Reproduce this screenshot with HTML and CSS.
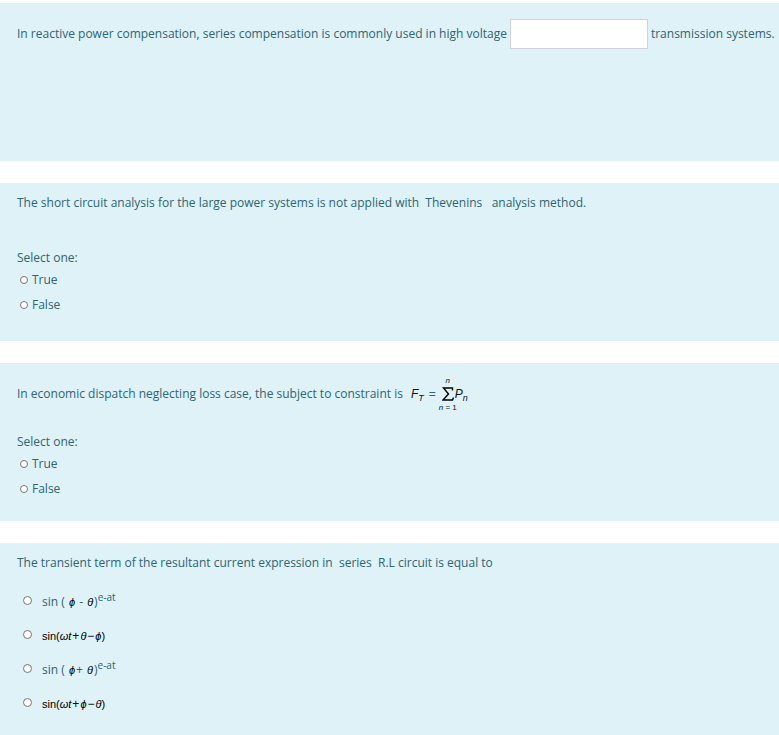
FILE: index.html
```html
<!DOCTYPE html>
<html lang="en">
<head>
<meta charset="utf-8">
<meta name="viewport" content="width=device-width, initial-scale=1">
<title>Quiz</title>
<link rel="stylesheet" href="styles.css">
</head>
<body>
<main class="quiz">
  <section class="question">
    <div class="prompt prompt-blank">
      <label for="blank">In reactive power compensation, series compensation is commonly used in high voltage</label>
      <input class="blank" id="blank" type="text">
      <span>transmission systems.</span>
    </div>
  </section>

  <section class="question">
    <p class="prompt">The short circuit analysis for the large power systems is not applied with&nbsp; Thevenins&nbsp;&nbsp; analysis method.</p>
    <fieldset class="answers answers-spaced">
      <legend>Select one:</legend>
      <label class="choice"><input type="radio" name="q2">True</label>
      <label class="choice"><input type="radio" name="q2">False</label>
    </fieldset>
  </section>

  <section class="question">
    <div class="prompt prompt-formula">
      <span>In economic dispatch neglecting loss case, the subject to constraint is</span>
      <span class="formula">
        <span><i>F</i><sub>T</sub></span>
        <span class="equals">=</span>
        <span class="sum">
          <span class="limit"><i>n</i></span>
          <svg class="sigma" viewBox="0 0 12 14" aria-hidden="true"><path d="M10.5 3.5V1H1.5L6.5 7L1 13H10.5L11.5 10.5" /></svg>
          <span class="limit"><i>n</i> = 1</span>
        </span>
        <span><i>P</i><sub>n</sub></span>
      </span>
    </div>
    <fieldset class="answers">
      <legend>Select one:</legend>
      <label class="choice"><input type="radio" name="q3">True</label>
      <label class="choice"><input type="radio" name="q3">False</label>
    </fieldset>
  </section>

  <section class="question question-last">
    <p class="prompt">The transient term of the resultant current expression in&nbsp; series&nbsp; R.L circuit is equal to</p>
    <div class="options">
      <label class="option"><input type="radio" name="q4"><span>sin ( <i>ϕ</i>&nbsp;- <i>θ</i>)<sup>e-at</sup></span></label>
      <label class="option"><input type="radio" name="q4"><span class="math">sin(<i>ωt</i><b>+</b><i>θ</i><b>−</b><i>ϕ</i>)</span></label>
      <label class="option"><input type="radio" name="q4"><span>sin ( <i>ϕ</i>+ <i>θ</i>)<sup>e-at</sup></span></label>
      <label class="option"><input type="radio" name="q4"><span class="math">sin(<i>ωt</i><b>+</b><i>ϕ</i><b>−</b><i>θ</i>)</span></label>
    </div>
  </section>
</main>
</body>
</html>
```
FILE: styles.css
```css
* { box-sizing: border-box; }

body {
  margin: 0;
  background: #fff;
  color: #2f6473;
  font-family: "Open Sans", "Noto Sans", sans-serif;
  font-size: 12px;
  line-height: 20px;
}

.quiz {
  display: flex;
  flex-direction: column;
  gap: 22px;
  min-height: 100vh;
  padding-top: 3px;
}

.question {
  min-height: 158px;
  padding: 10px 8px 10px 17px;
  background: #def2f8;
}

.question-last { flex: 1; }

.prompt { margin: 0; }

.prompt-blank {
  display: flex;
  align-items: center;
  gap: 3px;
  padding-top: 6px;
  white-space: nowrap;
}

.blank {
  flex: 0 0 138px;
  width: 138px;
  height: 30px;
  padding: 4px 8px;
  border: 1px solid #ced4da;
  background: #fff;
  font: inherit;
}

.answers {
  margin: 20px 0 0;
  padding: 0;
  border: 0;
}

.answers-spaced { margin-top: 35px; }

legend { padding: 0; }

.choice {
  display: flex;
  align-items: center;
  gap: 4px;
  margin: 2px 0 5px 3px;
}

input[type="radio"] {
  appearance: none;
  flex: none;
  width: 8px;
  height: 8px;
  margin: 0;
  border: 1px solid #767676;
  border-radius: 50%;
  background: #fff;
}

.prompt-formula {
  display: flex;
  align-items: center;
  gap: 8px;
  padding-top: 3px;
}

.formula {
  display: flex;
  align-items: center;
  color: #111;
  font-family: "Liberation Sans", sans-serif;
}

.equals { margin: 0 5px; color: #2f6473; }

.sum {
  display: flex;
  flex-direction: column;
  align-items: center;
  width: 14px;
}

.sigma {
  width: 12px;
  height: 14px;
  margin: 2px 0;
  fill: none;
  stroke: #000;
  stroke-width: 1.4;
}

.limit { font-size: 8px; line-height: 9px; white-space: nowrap; }

sub, sup { line-height: 0; }
sub { font-size: 9px; font-style: italic; }
sup { font-size: 10px; }

.options {
  display: flex;
  flex-direction: column;
  gap: 14px;
  margin-top: 19px;
}

.option {
  display: flex;
  align-items: center;
  gap: 10px;
  margin-left: 6px;
}

.option i, .math {
  color: #000;
  font-family: "Liberation Sans", sans-serif;
  font-size: 11px;
}

.option i { margin: 0 1px; }

.math i { margin: 0; }

.math b { margin: 0 1px; font-weight: 400; font-size: 12px; }

.option input[type="radio"] { width: 9px; height: 9px; margin-bottom: 4px; }
```
